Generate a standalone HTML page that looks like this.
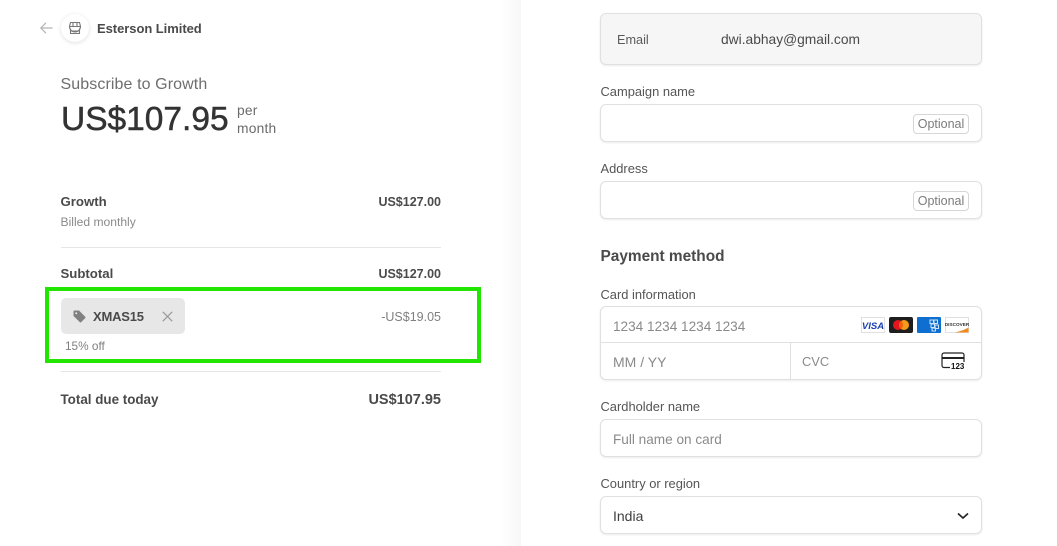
<!DOCTYPE html>
<html><head><meta charset="utf-8"><style>
html,body{margin:0;padding:0;background:#fff}
body{width:1057px;height:546px;overflow:hidden;position:relative;font-family:"Liberation Sans",sans-serif;color:#1a1a1a}
.t{position:absolute;white-space:nowrap;line-height:20px;height:20px}
.r{text-align:right}
.box{position:absolute;left:600px;width:380px;background:#fff;border:1px solid #e0e0e0;border-radius:6px;box-shadow:0 1px 2px rgba(0,0,0,.08)}
.lab{font-size:12.9px;color:#555;left:600.5px}
.ph{font-size:13.6px;color:#8a8a8a}
.opt{position:absolute;left:913px;width:54px;height:18px;border:1px solid #d6d6d6;border-radius:4px;font-size:12.5px;line-height:18px;text-align:center;color:#7c7c7c}
.hr{position:absolute;left:61px;width:380px;height:1px;background:#e6e6e6}
svg{position:absolute}
</style></head><body>
<div style="position:absolute;left:501px;top:0;width:20px;height:546px;background:linear-gradient(90deg,rgba(0,0,0,0),rgba(0,0,0,.03))"></div>

<svg style="left:39px;top:21px" width="15" height="14" viewBox="0 0 15 14" fill="none" stroke="#b4b4b4" stroke-width="1.200"><path d="M13.500 7H2M7 1.800 1.800 7 7 12.200"/></svg>
<div style="position:absolute;left:61px;top:14px;width:28px;height:28px;border-radius:50%;background:#fff;box-shadow:0 1px 4px rgba(0,0,0,.13)"></div>
<svg style="left:68px;top:21px" width="14" height="14" viewBox="0 0 14 14" fill="none" stroke="#777" stroke-width="1.100"><path d="M2.500 1.500h9l1 4a1.700 1.700 0 0 1-11 0zM1.600 5.500h10.800M5 1.500v4M9 1.500v4M2.500 7.500v5h9v-5M2.500 10h9"/></svg>
<div class="t" style="left:97px;top:19px;font-size:13px;font-weight:700;color:#4a4a4a;letter-spacing:-.05px">Esterson Limited</div>

<div class="t" style="left:60.500px;top:75px;font-size:16px;color:#6e6e6e;letter-spacing:.1px">Subscribe to Growth</div>
<div class="t" style="left:61px;top:97px;font-size:33.500px;line-height:46px;height:46px;color:#333;-webkit-text-stroke:.5px #333">US$107.95</div>
<div class="t" style="left:237px;top:101px;font-size:13.800px;color:#6b6b6b;letter-spacing:.2px">per</div>
<div class="t" style="left:237px;top:119px;font-size:13.800px;color:#6b6b6b;letter-spacing:.2px">month</div>

<div class="t" style="left:60.500px;top:192px;font-size:13.200px;font-weight:700;color:#4a4a4a">Growth</div>
<div class="t r" style="right:616px;top:192px;font-size:12.500px;font-weight:700;color:#4a4a4a">US$127.00</div>
<div class="t" style="left:60.500px;top:212px;font-size:12.100px;color:#8a8a8a">Billed monthly</div>
<div class="hr" style="top:247px"></div>
<div class="t" style="left:60.500px;top:264px;font-size:13.200px;font-weight:700;color:#4a4a4a">Subtotal</div>
<div class="t r" style="right:616px;top:264px;font-size:12.500px;font-weight:700;color:#4a4a4a">US$127.00</div>

<div style="position:absolute;left:45px;top:287px;width:428px;height:68px;border:4px solid #24e500"></div>
<div style="position:absolute;left:61px;top:298px;width:124px;height:36px;background:#e7e7e7;border-radius:5px"></div>
<svg style="left:73px;top:310px" width="13" height="13" viewBox="0 0 13 13"><path fill="#808080" d="M.5 1.500A1 1 0 0 1 1.500.5H6l6.200 6.200a1 1 0 0 1 0 1.400l-4 4a1 1 0 0 1-1.400 0L.5 6zM3.200 2.200a1 1 0 1 0 .01 0z" fill-rule="evenodd"/></svg>
<div class="t" style="left:93px;top:307px;font-size:13px;font-weight:700;color:#4a4a4a;letter-spacing:-.2px">XMAS15</div>
<svg style="left:161.500px;top:310.500px" width="11" height="11" viewBox="0 0 11 11" fill="none" stroke="#999" stroke-width="1.200"><path d="M.8.8l9.400 9.400M10.200.8.8 10.200"/></svg>
<div class="t" style="left:65px;top:336px;font-size:11.800px;color:#808080">15% off</div>
<div class="t r" style="right:616px;top:307px;font-size:12.500px;color:#808080">-US$19.05</div>
<div class="hr" style="top:371px"></div>
<div class="t" style="left:60.500px;top:390px;font-size:13.400px;font-weight:700;color:#4a4a4a">Total due today</div>
<div class="t r" style="right:616px;top:390px;font-size:14.500px;font-weight:700;color:#4a4a4a">US$107.95</div>

<div class="box" style="top:13px;height:50px;background:#f6f6f6"></div>
<div class="t" style="left:617px;top:30px;font-size:12.700px;color:#5a5a5a">Email</div>
<div class="t" style="left:721px;top:30px;font-size:13.800px;color:#4a4a4a">dwi.abhay@gmail.com</div>

<div class="t lab" style="top:82px">Campaign name</div>
<div class="box" style="top:104px;height:36px"></div>
<div class="opt" style="top:114px">Optional</div>

<div class="t lab" style="top:159px">Address</div>
<div class="box" style="top:181px;height:36px"></div>
<div class="opt" style="top:191px">Optional</div>

<div class="t" style="left:600.500px;top:247px;font-size:15.400px;font-weight:700;color:#4a4a4a">Payment method</div>

<div class="t lab" style="top:285px">Card information</div>
<div class="box" style="top:306px;height:72px"></div>
<div style="position:absolute;left:601px;top:342px;width:380px;height:1px;background:#e0e0e0"></div>
<div style="position:absolute;left:790px;top:343px;width:1px;height:36px;background:#e0e0e0"></div>
<div class="t ph" style="left:613px;top:316.600px">1234 1234 1234 1234</div>
<div class="t ph" style="left:613px;top:352px;font-size:14px">MM / YY</div>
<div class="t ph" style="left:802px;top:352px;font-size:12.900px">CVC</div>

<svg style="left:861px;top:317px" width="109" height="17" viewBox="0 0 109 17">
<rect x=".5" y=".5" width="23" height="15" fill="#fff" stroke="#e0e0e0"/>
<text x="12" y="12" font-family="Liberation Sans,sans-serif" font-size="9.500" font-weight="700" font-style="italic" fill="#1a3fb0" text-anchor="middle">VISA</text>
<rect x="28" y="0" width="24" height="16" rx="2" fill="#1e1e1e"/>
<circle cx="37" cy="8" r="5" fill="#e3161d"/><circle cx="43" cy="8" r="5" fill="#f79a1c"/>
<path d="M40 4a5 5 0 0 1 0 8 5 5 0 0 1 0-8z" fill="#f2600f"/>
<rect x="56" y="0" width="24" height="16" rx="1" fill="#0f6fd0"/>
<g fill="none" stroke="#cfe3f7" stroke-width="1"><rect x="69" y="3" width="3.500" height="3.500"/><rect x="73" y="3" width="3.500" height="3.500"/><rect x="70" y="7" width="3.500" height="3.500"/><rect x="74" y="8" width="3.500" height="3.500"/><rect x="71" y="11" width="3.500" height="3"/></g>
<rect x="84.500" y=".5" width="23" height="15" fill="#fff" stroke="#e0e0e0"/>
<text x="96" y="9" font-family="Liberation Sans,sans-serif" font-size="4.700" font-weight="700" fill="#333" text-anchor="middle">DISCOVER</text>
<path d="M94 15.500C100 14 104 12.500 107.500 10.500v5z" fill="#ef8a22"/>
</svg>
<svg style="left:941px;top:352px" width="26" height="18" viewBox="0 0 26 18" fill="none" stroke="#222" stroke-width="1.200"><path d="M9 15.500H3a2 2 0 0 1-2-2V3a2 2 0 0 1 2-2h18a2 2 0 0 1 2 2v7"/><path d="M1 6h22" stroke-width="2"/><text x="10" y="17" font-family="Liberation Sans,sans-serif" font-size="8" font-weight="700" fill="#111" stroke="none">123</text></svg>

<div class="t lab" style="top:397px">Cardholder name</div>
<div class="box" style="top:419px;height:36px"></div>
<div class="t ph" style="left:613px;top:429.600px">Full name on card</div>

<div class="t lab" style="top:474px">Country or region</div>
<div class="box" style="top:496px;height:36px"></div>
<div class="t" style="left:613px;top:506px;font-size:14px;color:#404040">India</div>
<svg style="left:957px;top:512px" width="12" height="8" viewBox="0 0 12 8" fill="none" stroke="#222" stroke-width="1.600"><path d="M1 1.500l5 4.500 5-4.500"/></svg>
</body></html>
